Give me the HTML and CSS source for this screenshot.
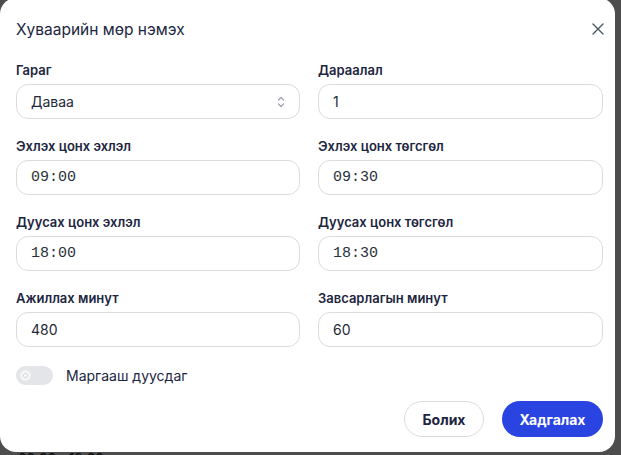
FILE: index.html
```html
<!DOCTYPE html>
<html lang="mn">
<head>
    <meta charset="UTF-8">
    <meta name="viewport" content="width=device-width, initial-scale=1.0">
    <title>Хуваарийн мөр нэмэх</title>
    <link rel="stylesheet" href="styles.css">
</head>
<body>
    <div class="backdrop-text">09:00 - 18:00</div>

    <div class="modal">
        <div class="modal-header">
            <h2 class="modal-title">Хуваарийн мөр нэмэх</h2>
            <button class="close-btn" aria-label="Хаах">
                <svg width="14" height="14" viewBox="0 0 14 14" fill="none" stroke="#4b5563" stroke-width="1.4" stroke-linecap="round">
                    <path d="M2 2 L12 12 M12 2 L2 12"/>
                </svg>
            </button>
        </div>

        <form class="form-grid">
            <div class="field">
                <label>Гараг</label>
                <div class="input select">
                    <span>Даваа</span>
                    <svg width="10" height="14" viewBox="0 0 10 14" fill="none" stroke="#9ca3af" stroke-width="1.2" stroke-linecap="round" stroke-linejoin="round">
                        <path d="M2.5 5 L5 2.5 L7.5 5"/>
                        <path d="M2.5 9 L5 11.5 L7.5 9"/>
                    </svg>
                </div>
            </div>
            <div class="field">
                <label>Дараалал</label>
                <div class="input">1</div>
            </div>

            <div class="field">
                <label>Эхлэх цонх эхлэл</label>
                <div class="input time">09:00</div>
            </div>
            <div class="field">
                <label>Эхлэх цонх төгсгөл</label>
                <div class="input time">09:30</div>
            </div>

            <div class="field">
                <label>Дуусах цонх эхлэл</label>
                <div class="input time">18:00</div>
            </div>
            <div class="field">
                <label>Дуусах цонх төгсгөл</label>
                <div class="input time">18:30</div>
            </div>

            <div class="field">
                <label>Ажиллах минут</label>
                <div class="input">480</div>
            </div>
            <div class="field">
                <label>Завсарлагын минут</label>
                <div class="input">60</div>
            </div>
        </form>

        <div class="switch-row">
            <span class="switch"><span class="knob"></span></span>
            <span class="switch-label">Маргааш дуусдаг</span>
        </div>

        <div class="actions">
            <button class="btn btn-cancel">Болих</button>
            <button class="btn btn-save">Хадгалах</button>
        </div>
    </div>
</body>
</html>
```

FILE: styles.css
```css
* {
    box-sizing: border-box;
    margin: 0;
    padding: 0;
}

body {
    position: relative;
    width: 621px;
    height: 455px;
    overflow: hidden;
    background-color: #4d4d4d;
    font-family: Inter, "Noto Sans", sans-serif;
    color: #1c2540;
}

.backdrop-text {
    position: absolute;
    left: 18px;
    top: 450px;
    font-size: 13px;
    line-height: 16px;
    font-weight: 600;
    color: #111;
}

.modal {
    position: absolute;
    left: 0;
    top: -2px;
    width: 615px;
    height: 454px;
    background-color: #fff;
    border-radius: 16px;
    padding: 0 12px 0 16px;
}

.modal-header {
    display: flex;
    justify-content: space-between;
    align-items: center;
    height: 64px;
    padding-bottom: 2px;
}

.modal-title {
    font-size: 15.5px;
    font-weight: 400;
    color: #1c2540;
}

.close-btn {
    border: none;
    background: none;
    display: flex;
    margin-right: -2px;
    cursor: pointer;
}

.form-grid {
    display: grid;
    grid-template-columns: 284px 285px;
    column-gap: 18px;
    row-gap: 19px;
}

.field label {
    display: block;
    font-size: 13px;
    font-weight: 600;
    color: #1c2540;
    line-height: 16px;
    margin-bottom: 6px;
}

.input {
    display: flex;
    align-items: center;
    justify-content: space-between;
    height: 35px;
    padding: 0 14px;
    border: 1px solid #dcdcdf;
    border-radius: 12px;
    font-size: 14px;
    color: #1f2937;
}

.input.time {
    font-family: "Liberation Mono", "DejaVu Sans Mono", monospace;
    font-size: 15px;
    color: #2a2f3a;
}

.select svg {
    margin-right: -1px;
}

.switch-row {
    display: flex;
    align-items: center;
    gap: 13px;
    margin-top: 19px;
}

.switch {
    display: flex;
    align-items: center;
    width: 37px;
    height: 19px;
    border-radius: 10px;
    background-color: #e4e5e8;
    padding-left: 4px;
}

.knob {
    width: 11px;
    height: 11px;
    border-radius: 50%;
    background-color: #fff;
    border: 3px solid #f4f4f5;
    box-shadow: inset 0 0 0 1px #cfd1d6;
}

.switch-label {
    font-size: 14px;
    color: #1c2540;
}

.actions {
    display: flex;
    justify-content: flex-end;
    gap: 18px;
    margin-top: 16px;
}

.btn {
    height: 36px;
    border-radius: 18px;
    font-family: Inter, "Noto Sans", sans-serif;
    font-size: 14px;
    font-weight: 700;
    cursor: pointer;
}

.btn-cancel {
    width: 80px;
    background-color: #fff;
    border: 1px solid #dcdcdf;
    color: #1c2540;
}

.btn-save {
    width: 101px;
    background-color: #2a44e2;
    border: none;
    color: #fff;
}
```
